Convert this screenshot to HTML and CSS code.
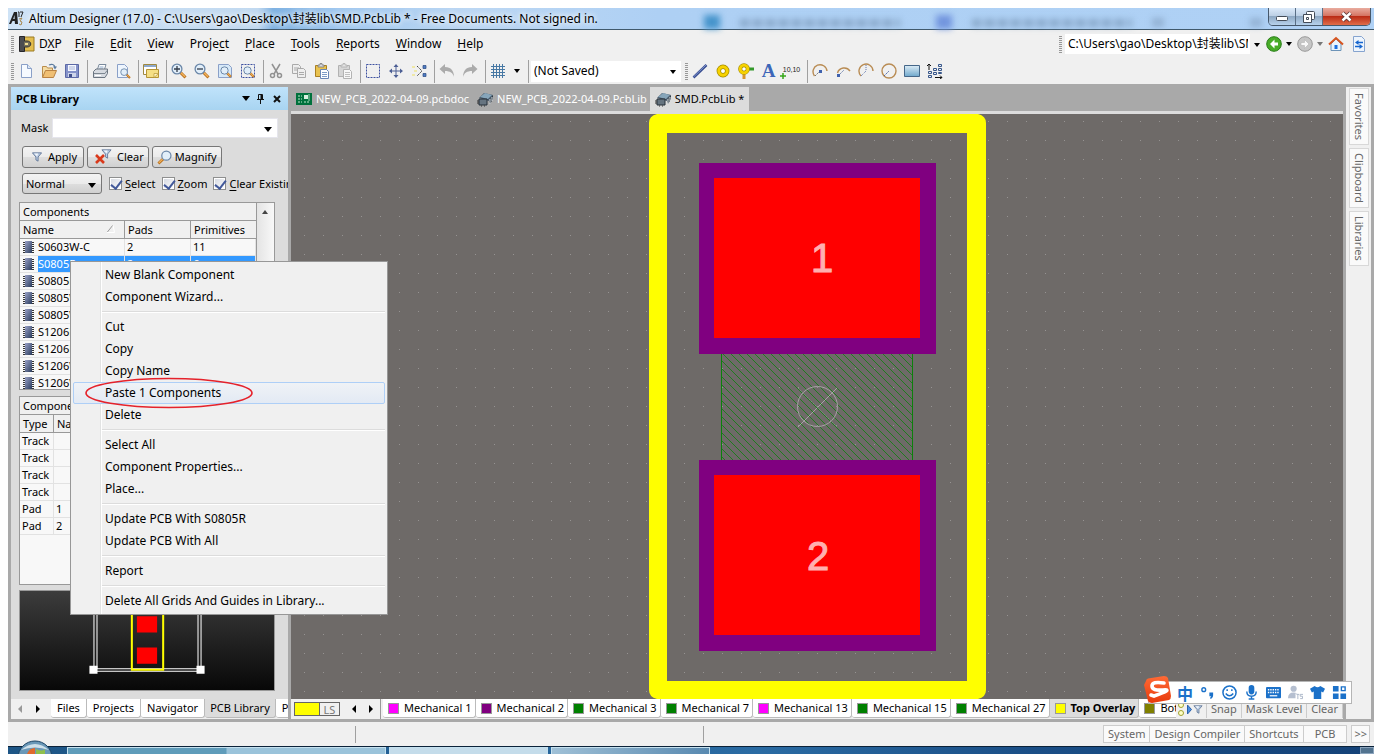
FILE: index.html
```html
<!DOCTYPE html>
<html lang="en">
<head>
<meta charset="utf-8">
<title>Altium Designer (17.0)</title>
<link rel="stylesheet" href="styles.css">
</head>
<body>
<svg class="defs" aria-hidden="true">
  <defs>
    <linearGradient id="gBlue" x1="0" y1="0" x2="0" y2="1"><stop offset="0" stop-color="#dcecf6"/><stop offset="1" stop-color="#6fa8cc"/></linearGradient>
    <linearGradient id="gChip" x1="0" y1="0" x2="1" y2="1"><stop offset="0" stop-color="#9aa2c8"/><stop offset="1" stop-color="#2b3d5e"/></linearGradient>
    <linearGradient id="gSogou" x1="0" y1="0" x2="0" y2="1"><stop offset="0" stop-color="#ff6a35"/><stop offset="1" stop-color="#e83a0c"/></linearGradient>
    <symbol id="chip" viewBox="0 0 12 14"><path d="M0 2.500h11M0 4.500h11M0 6.500h11M0 8.500h11M0 10.500h11M0 12.500h11" stroke="#333"/><path d="M2 1h7v12H2z" fill="url(#gChip)"/></symbol>
    <symbol id="lens" viewBox="0 0 16 16"><path d="M9.5 9.5l5 5" stroke="#b9701d" stroke-width="3"/><path d="M9.5 9.2l4.5 4.5" stroke="#f2b35c" stroke-width="1.4"/><circle cx="6" cy="6" r="4.9" fill="#e1eef9" stroke="#6b87a8" stroke-width="1.3"/></symbol>
    <symbol id="paste" viewBox="0 0 16 16"><path d="M1.5 2.5h11v11h-11z" fill="#e9c24f" stroke="#a97f22"/><path d="M4 4V2h2V.5h2V2h2v2z" fill="#d9dbe0" stroke="#777" stroke-width=".8"/><path d="M6.500 6.500h6l2 2v7h-8z" fill="#fff" stroke="#6a86b4"/><path d="M8 9.500h5M8 11.500h5M8 13.500h5" stroke="#7f9cc6"/></symbol>
    <symbol id="pkg" viewBox="0 0 16 16"><path d="M2 7l5-5 9 2-4 6z" fill="#46586a"/><path d="M3 6l5-4 7 2-4 4z" fill="#86a5ba"/><path d="M12 10l4-6v4l-3 5" fill="#23313d"/><path d="M13 8v5M15 6v4M6 9v3" stroke="#dfe4e8"/><path d="M2 8h8v6H2z" fill="#667480" stroke="#26303a"/><path d="M0 10h2M0 12h2M4 15h1M7 15h1" stroke="#333"/></symbol>
    <symbol id="funnel" viewBox="0 0 12 12"><path d="M.5 1h11L7.300 6v5l-2.600-1.500V6z" fill="#b9cbe3" stroke="#5a7091"/><path d="M2.500 1.700h5L6 5z" fill="#f2f7fc"/></symbol>
    <symbol id="left" viewBox="0 0 6 8"><path d="M5 0v8L1 4z" fill="currentColor"/></symbol>
    <symbol id="right" viewBox="0 0 6 8"><path d="M1 0v8l4-4z" fill="currentColor"/></symbol>
  </defs>
</svg>
<div class="app">
  <header class="titlebar">
    <svg class="logo" viewBox="0 0 16 16"><path d="M1 14L6 2h3l1 12H7l-.3-3H4.500L3 14zM5.200 9h1.500L6.500 5z" fill="#222"/><path d="M10 2h1v5M12 2h3l-2 5" stroke="#222" fill="none"/><path d="M11 9l3-1-2 3 2 1-1 3-2-1" stroke="#a98a52" fill="none"/></svg>
    <h1 class="title">Altium Designer (17.0) - C:\Users\gao\Desktop\封装lib\SMD.PcbLib * - Free Documents. Not signed in.</h1>
    <div class="glass"><i class="glass-icon"></i><i class="glass-text wide"></i><i class="glass-icon violet"></i><i class="glass-text"></i><i class="glass-mark"></i><i class="glass-mark"></i></div>
    <div class="window-buttons">
      <button class="win" aria-label="Minimize"><svg width="14" height="10" viewBox="0 0 14 10"><rect x="1.500" y="4.500" width="11" height="4" rx="1" fill="#fff" stroke="#444c58"/></svg></button>
      <button class="win" aria-label="Restore"><svg width="12" height="12" viewBox="0 0 12 12"><rect x="3.500" y=".5" width="8" height="8" rx="1" fill="#fff" stroke="#444c58"/><path d="M.5 3.500h8v8h-8z" fill="#fff" stroke="#444c58"/><path d="M3.500 6.500h2v2h-2z" fill="none" stroke="#444c58"/></svg></button>
      <button class="win close" aria-label="Close"><svg width="13" height="11" viewBox="0 0 13 11"><path d="M2.500 2l8 7.500m0-7.500l-8 7.500" stroke="#5c3535" stroke-width="4.200"/><path d="M2.500 2l8 7.500m0-7.500l-8 7.500" stroke="#fff" stroke-width="2.500"/></svg></button>
    </div>
  </header>

  <nav class="menubar">
    <i class="grip"></i>
    <svg class="dxp" viewBox="0 0 16 16"><path d="M5 1h10v14H5z" fill="#e3bd4e" stroke="#9b7a22"/><path d="M.5.500h5v15h-5z" fill="#4c4c50" stroke="#26262a"/><path d="M5 5h3c5 0 5 6 0 6H5" fill="#76705c" stroke="#333"/><path d="M6 8h3" stroke="#f1dd91" stroke-width="2"/></svg>
    <button class="menu first">D<u>X</u>P</button><button class="menu"><u>F</u>ile</button><button class="menu"><u>E</u>dit</button><button class="menu"><u>V</u>iew</button><button class="menu">Proje<u>c</u>t</button><button class="menu"><u>P</u>lace</button><button class="menu"><u>T</u>ools</button><button class="menu"><u>R</u>eports</button><button class="menu"><u>W</u>indow</button><button class="menu"><u>H</u>elp</button>
    <div class="path-tools">
      <i class="grip"></i>
      <div class="combo path"><select aria-label="Document path"><option>C:\Users\gao\Desktop\封装lib\SMD</option></select></div>
      <button class="tool nav" aria-label="Back"><svg viewBox="0 0 16 16"><circle cx="8" cy="8" r="7.300" fill="#48ac28" stroke="#297e18"/><path d="M8.500 3.500L4 8l4.500 4.500v-3H12v-3H8.500z" fill="#fff"/></svg></button>
      <button class="drop" aria-label="Back history"></button>
      <button class="tool nav" aria-label="Forward"><svg viewBox="0 0 16 16"><circle cx="8" cy="8" r="7.300" fill="#c6c6c6" stroke="#999"/><path d="M7.500 3.500L12 8l-4.500 4.500v-3H4v-3h3.500z" fill="#f8f8f8" stroke="#aaa" stroke-width=".5"/></svg></button>
      <button class="drop dim" aria-label="Forward history"></button>
      <button class="tool" aria-label="Home"><svg viewBox="0 0 16 16"><path d="M3 8v6.500h10V8L8 3z" fill="#e9f3fc" stroke="#6d94b8"/><path d="M6.500 9h3v4h-3z" fill="#1b6fe0"/><path d="M1 8.500L8 2l7 6.500" fill="none" stroke="#d8551f" stroke-width="2"/></svg></button>
      <button class="tool" aria-label="Refresh"><svg viewBox="0 0 16 16"><path d="M2.500.500h8l3 3v12h-11z" fill="#eef5fd" stroke="#86a4cf"/><path d="M12 6.500H7M4 10.500h5" stroke="#1565cf" stroke-width="1.500"/><path d="M7.500 4l-3.500 2.500 3.500 2.500zM8.500 8l3.500 2.500-3.500 2.500z" fill="#1565cf"/></svg></button>
    </div>
  </nav>

  <div class="toolbar">
    <i class="grip"></i>
    <button class="tool" aria-label="New"><svg viewBox="0 0 16 16"><path d="M3.500 1.500h6l4 4v9h-10z" fill="#f6faff" stroke="#8aa0c8"/><path d="M9.500 1.500v4h4" fill="#dbe7f6" stroke="#8aa0c8"/></svg></button>
    <button class="tool" aria-label="Open"><svg viewBox="0 0 16 16"><path d="M1.500 14V3.500h4l1 1.500h5v3" fill="#f4dca4" stroke="#b98c4b"/><path d="M1.500 14.500l3-7h11l-3 7z" fill="#f0bf73" stroke="#b98243"/><path d="M8 2c3-1.500 5-.5 6 2" fill="none" stroke="#5d7c9f" stroke-width="1.300"/><path d="M12 3.500h4l-2 3z" fill="#5d7c9f"/></svg></button>
    <button class="tool" aria-label="Save"><svg viewBox="0 0 16 16"><path d="M1.500 1.500h13v13h-13z" fill="#8592c9" stroke="#5c69a6"/><path d="M4 2h8v6H4z" fill="#f6f8ff"/><path d="M5 4h6M5 6h6" stroke="#a9b6d8"/><path d="M4 10h8v4H4z" fill="#cfd6ea"/><path d="M5 11h3v3H5z" fill="#42508b"/></svg></button>
    <i class="sep"></i>
    <button class="tool" aria-label="Print"><svg viewBox="0 0 16 16"><path d="M5 8l2-6.500h7L12 8z" fill="#fff" stroke="#7a8a9c"/><path d="M7.500 4h4M7 6h4" stroke="#8eaacb"/><path d="M1.500 8.500L4 6h11.500v4.500L13 14.500H1.500z" fill="#d7dbe1" stroke="#6a7480"/><path d="M2 10.500h11l2-3" fill="none" stroke="#7d8791"/><path d="M3 12.500h6" stroke="#fff"/></svg></button>
    <button class="tool" aria-label="Print preview"><svg viewBox="0 0 16 16"><path d="M2.500 1.500h7l3 3v10h-10z" fill="#eef5fd" stroke="#8aa0c8"/><use href="#lens" x="5" y="5" width="11" height="11"/></svg></button>
    <i class="sep"></i>
    <button class="tool" aria-label="Workspace"><svg viewBox="0 0 16 16"><path d="M.5 1.500h13v10H.5z" fill="#fff" stroke="#a0893f"/><path d="M1 2h12v2H1z" fill="#8da9cd"/><path d="M3.500 6.500h12v8h-12z" fill="#f5df84" stroke="#b69536"/><path d="M11 14.500l4.500-4h-4.500z" fill="#fff6c5" stroke="#b69536" stroke-width=".7"/></svg></button>
    <i class="sep"></i>
    <button class="tool" aria-label="Zoom in"><svg viewBox="0 0 16 16"><use href="#lens"/><path d="M3 6h6M6 3v6" stroke="#333d4b" stroke-width="1.300"/></svg></button>
    <button class="tool" aria-label="Zoom out"><svg viewBox="0 0 16 16"><use href="#lens"/><path d="M3 6h6" stroke="#333d4b" stroke-width="1.300"/></svg></button>
    <button class="tool" aria-label="Fit document"><svg viewBox="0 0 16 16"><path d="M1.500 1.500h10l3 3v10h-13z" fill="#d7e9f8" stroke="#8aa0c8"/><use href="#lens" x="3" y="3" width="12" height="12"/></svg></button>
    <button class="tool" aria-label="Zoom area"><svg viewBox="0 0 16 16"><path d="M1.500 1.500h13v13h-13z" fill="none" stroke="#3d51a0" stroke-dasharray="2 1"/><use href="#lens" x="3" y="3" width="12" height="12"/></svg></button>
    <i class="sep"></i>
    <button class="tool" aria-label="Cut"><svg viewBox="0 0 16 16" fill="none" stroke="#929292" stroke-width="1.500"><path d="M4 1l6 10M12 1L6 11"/><circle cx="4.500" cy="12.500" r="2"/><circle cx="11.500" cy="12.500" r="2"/></svg></button>
    <button class="tool" aria-label="Copy"><svg viewBox="0 0 16 16" fill="#eee" stroke="#aaa"><path d="M1.500 1.500h6l2 2v7h-8zM3 5h5M3 7h5"/><path d="M6.500 5.500h6l2 2v7h-8zM8 9.500h5M8 11.500h5"/></svg></button>
    <button class="tool" aria-label="Paste"><svg viewBox="0 0 16 16"><use href="#paste"/></svg></button>
    <button class="tool grey" aria-label="Rubber stamp"><svg viewBox="0 0 16 16"><use href="#paste"/></svg></button>
    <i class="sep"></i>
    <button class="tool" aria-label="Select area"><svg viewBox="0 0 16 16"><path d="M1.500 1.500h13v13h-13z" fill="none" stroke="#3d51a0" stroke-dasharray="2 1"/></svg></button>
    <button class="tool" aria-label="Move"><svg viewBox="0 0 16 16"><path d="M8 2v12M2 8h12" stroke="#4c5f94"/><path d="M8 1l2.500 3h-5zM8 15l2.500-3h-5zM1 8l3-2.500v5zM15 8l-3-2.500v5z" fill="#4c5f94"/></svg></button>
    <button class="tool" aria-label="Deselect"><svg viewBox="0 0 16 16"><path d="M1 3h3v2H1zM1 11h3v2H1zM3 7h3v2H3z" fill="#efe8a8"/><path d="M6 3l5 5-5 5" fill="none" stroke="#444" stroke-dasharray="1.500 .7"/><path d="M12 2.500h3v3h-3zM12 10.500h3v3h-3z" fill="#4f7cc4" stroke="#29497f" stroke-width=".7"/></svg></button>
    <i class="sep"></i>
    <button class="tool" aria-label="Undo"><svg viewBox="0 0 16 16"><path d="M6 1v3c6 0 9 4 9 10-1-4-4-6-9-6v3L.5 6z" fill="#ababab"/></svg></button>
    <button class="tool" aria-label="Redo"><svg viewBox="0 0 16 16"><path d="M10 1v3C4 4 1 8 1 14c1-4 4-6 9-6v3l5.500-5z" fill="#ababab"/></svg></button>
    <i class="sep"></i>
    <button class="tool" aria-label="Grid"><svg viewBox="0 0 16 16"><path d="M3.500 1v14M6.500 1v14M9.500 1v14M12.500 1v14M1 3.500h14M1 6.500h14M1 9.500h14M1 12.500h14" stroke="#4778a4"/></svg></button>
    <button class="drop" aria-label="Grid options"></button>
    <i class="sep"></i>
    <div class="combo saved"><select aria-label="Selection memory"><option>(Not Saved)</option></select></div>
    <i class="grip"></i>
    <button class="tool" aria-label="Line"><svg viewBox="0 0 16 16"><path d="M1.500 14.500L14.500 2" stroke="#374d91" stroke-width="2.600"/><path d="M1.500 14L14 2" stroke="#8195ce"/></svg></button>
    <button class="tool" aria-label="Pad"><svg viewBox="0 0 16 16"><circle cx="8" cy="8" r="4.200" fill="#fff" stroke="#a08a00" stroke-width="4.400"/><circle cx="8" cy="8" r="4.200" fill="none" stroke="#f7d200" stroke-width="3"/></svg></button>
    <button class="tool" aria-label="Via"><svg viewBox="0 0 16 16"><path d="M10 6h6" stroke="#33992a" stroke-width="3"/><path d="M6 9v7" stroke="#d7962c" stroke-width="3"/><circle cx="6" cy="6" r="3.800" fill="#fff" stroke="#a08a00" stroke-width="4"/><circle cx="6" cy="6" r="3.800" fill="none" stroke="#f7d200" stroke-width="2.800"/></svg></button>
    <button class="tool letter" aria-label="String">A</button>
    <button class="tool coord" aria-label="Coordinate">10,10<svg viewBox="0 0 6 6"><path d="M3 0v6M0 3h6" stroke="#35a517" stroke-width="1.500"/></svg></button>
    <i class="sep"></i>
    <button class="tool" aria-label="Arc by center"><svg viewBox="0 0 16 16" fill="none"><path d="M2.500 13A7 7 0 1 1 15 8" stroke="#b98c54" stroke-width="1.400"/><path d="M3 13l5-5" stroke="#777" stroke-dasharray="2 1"/><path d="M7 7h3v3H7z" fill="#3f61ae"/></svg></button>
    <button class="tool" aria-label="Arc by edge"><svg viewBox="0 0 16 16" fill="none"><path d="M2.500 10A7 7 0 0 1 15 8" stroke="#b98c54" stroke-width="1.400"/><path d="M3 13l6-6" stroke="#7184ad" stroke-dasharray="2 1"/><path d="M2 11h3v3H2z" fill="#3f61ae"/></svg></button>
    <button class="tool" aria-label="Arc any angle"><svg viewBox="0 0 16 16" fill="none"><path d="M3 13A7 7 0 1 1 15 8" stroke="#b98c54" stroke-width="1.400"/><path d="M3 13l5-5V1" stroke="#5b72ad" stroke-dasharray="1 1"/></svg></button>
    <button class="tool" aria-label="Full circle"><svg viewBox="0 0 16 16" fill="none"><circle cx="8" cy="8" r="7" stroke="#b98c54" stroke-width="1.400"/><path d="M3 13l5-5" stroke="#4d65a5" stroke-dasharray="2 1"/></svg></button>
    <button class="tool" aria-label="Fill"><svg viewBox="0 0 16 16"><path d="M.5 2.500h15v11H.5z" fill="url(#gBlue)" stroke="#456789"/></svg></button>
    <button class="tool" aria-label="Paste array"><svg viewBox="0 0 16 16" fill="none" stroke="#37568b"><path d="M2 7V1M0 3l2-2 2 2M8 14.500h7M13 12.500l2 2-2 1.500" stroke="#111"/><path d="M1.500 8.500h3v2h-3zM1.500 12.500h3v2h-3zM6.500 5.500h3v2h-3zM6.500 9.500h3v2h-3zM11.500 1.500h3v2h-3zM11.500 5.500h3v2h-3zM11.500 9.500h3v1h-3z"/></svg></button>
  </div>

  <main class="work">
    <aside class="panel">
      <div class="panel-head"><h2>PCB Library</h2>
        <button class="drop" aria-label="Panel menu"></button>
        <button class="mini" aria-label="Pin"><svg width="10" height="10" viewBox="0 0 10 10"><path d="M2.500.500h4v5h-4zM1 5.500h7M4.500 6v4" fill="none" stroke="#111"/><path d="M5.500 1v4" stroke="#111" stroke-width="2"/></svg></button>
        <button class="mini" aria-label="Close panel"><svg width="8" height="8" viewBox="0 0 8 8"><path d="M1 1l6 6m0-6L1 7" stroke="#111" stroke-width="2"/></svg></button>
      </div>
      <div class="panel-body">
        <div class="row mask"><label for="mask">Mask</label><div class="combo"><select id="mask"><option></option></select></div></div>
        <div class="row buttons">
          <button class="btn"><svg width="12" height="10" viewBox="0 0 12 12"><use href="#funnel"/></svg>Apply</button>
          <button class="btn"><svg width="18" height="16" viewBox="0 0 18 16"><path d="M2 6l8 8m0-8l-8 8" stroke="#d93a1c" stroke-width="2.600"/><use href="#funnel" x="7" y="0" width="11" height="10"/></svg>Clear</button>
          <button class="btn"><svg width="15" height="15" viewBox="0 0 16 16"><g transform="matrix(-1 0 0 1 16 0)"><use href="#lens"/></g></svg>Magnify</button>
        </div>
        <div class="row options">
          <div class="combo raised"><select aria-label="Mode"><option>Normal</option></select></div>
          <label class="check"><input type="checkbox" checked><span><u>S</u>elect</span></label>
          <label class="check"><input type="checkbox" checked><span><u>Z</u>oom</span></label>
          <label class="check"><input type="checkbox" checked><span><u>C</u>lear Existing</span></label>
        </div>
        <div class="list components">
          <table class="grid">
            <caption>Components</caption>
            <colgroup><col class="c-name"><col class="c-pads"><col></colgroup>
            <thead><tr><th>Name<svg class="sort" width="8" height="8" viewBox="0 0 8 8"><path d="M0 7.500L6 0" stroke="#999"/><path d="M6 0l1.500 7.500H0" fill="none" stroke="#fff"/></svg></th><th>Pads</th><th>Primitives</th></tr></thead>
            <tbody>
              <tr><td><svg class="chip"><use href="#chip"/></svg><span>S0603W-C</span></td><td>2</td><td>11</td></tr>
              <tr class="selected"><td><svg class="chip"><use href="#chip"/></svg><span>S0805R</span></td><td>2</td><td>6</td></tr>
              <tr><td><svg class="chip"><use href="#chip"/></svg><span>S0805R</span></td><td></td><td></td></tr>
              <tr><td><svg class="chip"><use href="#chip"/></svg><span>S0805W</span></td><td></td><td></td></tr>
              <tr><td><svg class="chip"><use href="#chip"/></svg><span>S0805W</span></td><td></td><td></td></tr>
              <tr><td><svg class="chip"><use href="#chip"/></svg><span>S1206R</span></td><td></td><td></td></tr>
              <tr><td><svg class="chip"><use href="#chip"/></svg><span>S1206R</span></td><td></td><td></td></tr>
              <tr><td><svg class="chip"><use href="#chip"/></svg><span>S1206W</span></td><td></td><td></td></tr>
              <tr><td><svg class="chip"><use href="#chip"/></svg><span>S1206W</span></td><td></td><td></td></tr>
            </tbody>
          </table>
          <div class="scroll"><i></i></div>
        </div>
        <div class="list primitives">
          <table class="grid">
            <caption>Component</caption>
            <colgroup><col class="c-type"><col></colgroup>
            <thead><tr><th>Type</th><th>Name</th></tr></thead>
            <tbody><tr><td>Track</td><td></td></tr><tr><td>Track</td><td></td></tr><tr><td>Track</td><td></td></tr><tr><td>Track</td><td></td></tr><tr><td>Pad</td><td>1</td></tr><tr><td>Pad</td><td>2</td></tr></tbody>
          </table>
        </div>
        <svg class="preview" viewBox="0 0 254 98" preserveAspectRatio="xMidYMax slice"><g fill="none"><path d="M74.500 0v79.500h106V0M77.500 0v77h100V0" stroke="#fff"/><path d="M112 0v78h31V0" stroke="#ff0" stroke-width="2"/></g><path d="M117 25h20v16h-20zM117 56h20v16h-20z" fill="#f00"/><path d="M70 74h8v8h-8zM176 74h8v8h-8z" fill="#fff"/></svg>
      </div>
      <div class="panel-tabs">
        <span class="arrows"><button class="dim" aria-label="Previous panel"><svg width="6" height="8"><use href="#left"/></svg></button><button aria-label="Next panel"><svg width="6" height="8"><use href="#right"/></svg></button></span>
        <button class="tab">Files</button><button class="tab">Projects</button><button class="tab">Navigator</button><button class="tab active">PCB Library</button><button class="tab">PCB</button>
      </div>
    </aside>

    <section class="editor">
      <div class="doc-tabs">
        <button class="doc"><svg viewBox="0 0 16 16"><path d="M0 2h16v12H0z" fill="#00713c"/><path d="M2 5h4M2 8h4M2 11h4M8 11h6" stroke="#bfe8cd" stroke-dasharray="2 1"/><path d="M8 4h4v4H8z" fill="#d8f0e0"/><path d="M13 3v7" stroke="#9cd8b3"/></svg>NEW_PCB_2022-04-09.pcbdoc</button>
        <button class="doc"><svg viewBox="0 0 16 16"><use href="#pkg"/></svg>NEW_PCB_2022-04-09.PcbLib</button>
        <button class="doc active"><svg viewBox="0 0 16 16"><use href="#pkg"/></svg>SMD.PcbLib *</button>
      </div>
      <svg class="canvas" viewBox="0 0 1052 585" preserveAspectRatio="xMidYMid slice" role="img" aria-label="Footprint S0805R">
        <defs>
          <pattern id="dots" width="19" height="19" patternUnits="userSpaceOnUse"><rect x="13" y="7" width="1" height="1" fill="#969392"/></pattern>
          <pattern id="hatch" width="8" height="8" patternUnits="userSpaceOnUse"><path d="M-1-1l10 10M-1 7l2 2M7-1l2 2" stroke="#0c800c" stroke-width=".8" shape-rendering="crispEdges"/></pattern>
        </defs>
        <path d="M0 0h1052v585H0z" fill="#6e6a68"/><path d="M0 0h1052v585H0z" fill="url(#dots)"/>
        <path d="M366 0h321q8 2 8 9v567q0 7-8 9H366q-8-2-8-9V9q0-7 8-9zM376 19v548h300V19z" fill="#ff0" fill-rule="evenodd"/>
        <path d="M430 240h192v106H430z" fill="url(#hatch)"/><path d="M430.500 240v106M621.500 240v106" stroke="#0c800c"/>
        <path d="M408 49h237v191H408zM408 346h237v191H408z" fill="#800080"/>
        <path d="M423 64h206v160H423zM423 361h206v160H423z" fill="#f00"/>
        <g fill="none" stroke="#a7a2a5"><circle cx="526.500" cy="292.500" r="20"/><path d="M507 313l39-39"/><path d="M507 274l39 39" stroke="#7d8f7e" stroke-dasharray="2 1"/></g>
        <g class="pad-names"><text x="531" y="158">1</text><text x="527" y="456">2</text></g>
      </svg>
      <div class="layers">
        <button class="layer-set"><i></i><span>LS</span></button>
        <span class="arrows"><button aria-label="Previous layer"><svg width="6" height="8"><use href="#left"/></svg></button><button aria-label="Next layer"><svg width="6" height="8"><use href="#right"/></svg></button></span>
        <div class="layer-tabs">
          <button class="tab layer"><i class="magenta"></i>Mechanical 1</button><button class="tab layer"><i class="purple"></i>Mechanical 2</button><button class="tab layer"><i class="green"></i>Mechanical 3</button><button class="tab layer"><i class="green"></i>Mechanical 7</button><button class="tab layer"><i class="magenta"></i>Mechanical 13</button><button class="tab layer"><i class="green"></i>Mechanical 15</button><button class="tab layer"><i class="green"></i>Mechanical 27</button><button class="tab layer active"><i class="yellow"></i>Top Overlay</button><button class="tab layer"><i class="olive"></i>Bottom</button>
        </div>
        <div class="filters">
          <button aria-label="Filter"><svg width="28" height="14" viewBox="0 0 28 14"><circle cx="4" cy="3" r="2.500" fill="#ffffc8" stroke="#a0a030"/><circle cx="4" cy="11" r="2.500" fill="#ffffc8" stroke="#a0a030"/><path d="M10.500 3v9l4-4.500z" fill="#4b8fe0" stroke="#2a62ad"/><use href="#funnel" x="16" y="3" width="10" height="9"/></svg></button><button>Snap</button><button>Mask Level</button><button>Clear</button>
        </div>
      </div>
    </section>

    <aside class="side"><button>Favorites</button><button>Clipboard</button><button>Libraries</button></aside>
  </main>

  <footer class="status">
    <span class="cell coord-cell"></span><span class="cell hint-cell"></span>
    <div class="status-buttons"><button>System</button><button>Design Compiler</button><button>Shortcuts</button><button class="pcb">PCB</button></div><button class="more">&gt;&gt;</button>
  </footer>

  <div class="taskbar"><i class="start"></i><i class="task teal"></i><i class="task pale"></i><i class="task mid"></i><i class="desk"></i>
    <svg class="orb" width="36" height="14" viewBox="0 0 36 14"><circle cx="18" cy="18" r="17" fill="#6a98b8" stroke="#1c4466"/><path d="M4 10q14-12 28 0-14-5-28 0z" fill="#cfe0ea"/><path d="M10 14q2-6 8-6v6z" fill="#e06a2c"/><path d="M19 9q6 3 9 0v5h-9z" fill="#8fc04c"/></svg>
  </div>

  <div class="context" role="menu">
    <button role="menuitem">New Blank Component</button><button role="menuitem">Component Wizard...</button><hr>
    <button role="menuitem">Cut</button><button role="menuitem">Copy</button><button role="menuitem">Copy Name</button><button role="menuitem" class="hot">Paste 1 Components</button><button role="menuitem">Delete</button><hr>
    <button role="menuitem">Select All</button><button role="menuitem">Component Properties...</button><button role="menuitem">Place...</button><hr>
    <button role="menuitem">Update PCB With S0805R</button><button role="menuitem">Update PCB With All</button><hr>
    <button role="menuitem">Report</button><hr>
    <button role="menuitem">Delete All Grids And Guides in Library...</button>
    <svg class="ring" viewBox="0 0 168 32"><ellipse cx="84" cy="16" rx="83" ry="14.500" fill="none" stroke="#e5222b" stroke-width="1.600"/></svg>
  </div>

  <div class="ime">
    <svg class="sogou" viewBox="0 0 28 28"><path d="M2 5Q2 3 4 2.500L20 0q3 0 4 2l3 18q0 3-2 4L8 27q-3 0-4-2L0 9z" fill="url(#gSogou)"/><path d="M20 7Q8 5 8 10t11 4-9 6l-3-1" fill="none" stroke="#fff" stroke-width="3.600" stroke-linecap="round"/></svg>
    <div class="ime-tools">
      <button lang="zh">中</button>
      <button aria-label="Punctuation"><svg viewBox="0 0 16 16"><circle cx="4" cy="5" r="2" fill="none" stroke="#1b71c9" stroke-width="1.500"/><path d="M10 8h4v3q0 3-3 4v-2l1-1h-2z" fill="#1b71c9"/></svg></button>
      <button aria-label="Emoji"><svg viewBox="0 0 16 16" fill="none" stroke="#1b71c9" stroke-width="1.600"><circle cx="8" cy="8" r="7"/><path d="M5.500 4.500v2M10.500 4.500v2M4 9q4 5 8 0"/></svg></button>
      <button aria-label="Voice"><svg viewBox="0 0 16 16"><rect x="5" y="0" width="6" height="10" rx="3" fill="#1b71c9"/><path d="M3 7q0 5 5 5t5-5M8 12v3M5 15h6" fill="none" stroke="#1b71c9" stroke-width="1.500"/></svg></button>
      <button aria-label="Keyboard"><svg viewBox="0 0 16 16"><rect x="0" y="2" width="16" height="12" rx="1" fill="#1b71c9"/><path d="M2 5h12M2 8h12" stroke="#fff" stroke-width="1.500" stroke-dasharray="1.500 1"/><path d="M4 11.500h8" stroke="#fff" stroke-width="1.300"/></svg></button>
      <button aria-label="Account"><svg viewBox="0 0 16 16"><circle cx="6" cy="4" r="3.300" fill="#b5bfd0"/><path d="M0 14q0-6 6-6 4 0 5 3v3z" fill="#b5bfd0"/><path d="M8 9h8v6H8z" fill="#fff"/><path d="M9 10h3M10.500 10v5M16 10h-3v2h2.500v2.500H13" fill="none" stroke="#aab5c8"/></svg></button>
      <button aria-label="Skins"><svg viewBox="0 0 16 16"><path d="M5 1q3 3 6 0l5 3-2 4-2-1v8H4V7L2 8 0 4z" fill="#1b71c9"/></svg></button>
      <button aria-label="Toolbox"><svg viewBox="0 0 16 16"><path d="M1 1h6v6H1zM1 9h6v6H1zM9 9h6v6H9z" fill="#1b71c9"/><path d="M10 2h4v4h-4z" fill="none" stroke="#1b71c9" stroke-width="1.500"/></svg></button>
    </div>
  </div>
</div>
</body>
</html>
```
FILE: styles.css
```css
* { box-sizing: border-box; }
body { margin: 0; background: #fff; font: 11px/16px "Noto Sans", "Noto Sans CJK SC", sans-serif; color: #000; }
button, select, input { font: inherit; color: inherit; margin: 0; }
button { padding: 0; border: 0; background: none; white-space: nowrap; }
svg { display: block; flex: none; }
.defs { position: absolute; width: 0; height: 0; }
.app { position: relative; display: flex; flex-direction: column; height: 100vh; padding: 8px 8px 0; overflow: hidden; }

.titlebar { display: flex; height: 22px; flex: none; align-items: flex-start; border-bottom: 1px solid #40596c; background: linear-gradient(90deg, #cfe3f6 0, #c1d9f0 250px, #7fb2e2 265px, #a0c8ef 330px, #bcd7f3 460px, #aed0f4 650px, #afd1f5 100%); }
.logo { width: 16px; height: 16px; margin: 2px 5px 0 0; }
.title { margin: 0; font-size: 12px; line-height: 21px; font-weight: 400; white-space: nowrap; text-shadow: 0 0 6px #fff, 0 0 6px #fff; }
.glass { display: flex; flex: 1; align-items: center; height: 21px; gap: 20px; padding-left: 106px; overflow: hidden; filter: blur(3px); }
.glass-icon { width: 16px; height: 14px; flex: none; background: #4594cb; margin-top: 6px; }
.glass-icon.violet { background: #7295de; margin-left: 16px; }
.glass-text { width: 160px; height: 8px; margin-top: 8px; background: repeating-linear-gradient(90deg, #6e8cac 0 9px, #a5c5e7 9px 13px); opacity: .6; }
.glass-mark { width: 12px; height: 9px; margin-top: 8px; background: #809dbd; opacity: .6; }
.glass-mark + .glass-mark { margin-left: 66px; }
.window-buttons { display: flex; height: 18px; margin-right: 3px; border: 1px solid #46586b; border-top: 0; border-radius: 0 0 5px 5px; overflow: hidden; }
.win { display: flex; width: 27px; align-items: center; justify-content: center; border-right: 1px solid #596e85; background: linear-gradient(#dceafa, #bdd0e5 45%, #8fa9c4 50%, #b7d2ec); }
.win.close { width: 47px; border-right: 0; background: linear-gradient(#e9ac9f, #d57463 45%, #bb2c16 50%, #e06d4a); }

.menubar, .toolbar { display: flex; flex: none; align-items: center; background: #f0f0f0; font-size: 12px; }
.menubar { height: 28px; padding-left: 3px; }
.toolbar { height: 26px; padding-left: 3px; }
.grip { width: 3px; height: 17px; flex: none; background: repeating-linear-gradient(#989898 0 1px, transparent 1px 2px); }
.dxp { width: 16px; height: 16px; margin-left: 5px; }
.menu { padding: 0 8px; line-height: 20px; }
.menu.first { padding: 0 5px 0 4px; }
u { text-underline-offset: 2px; }
.path-tools { display: flex; align-items: center; margin-left: auto; padding-right: 4px; }
.combo { position: relative; display: flex; background: #fff; }
.combo select { flex: 1; width: 100%; padding: 0 16px 0 2px; border: 0; background: none; appearance: none; overflow: hidden; }
.combo::after { content: ""; position: absolute; right: 5px; top: calc(50% - 1px); border: 3px solid transparent; border-top: 4px solid #000; border-bottom: 0; pointer-events: none; }
.path { width: 197px; height: 20px; margin-left: 3px; border-right: 12px solid #f0f0f0; }
.path select { padding: 0 2px 0 3px; }
.path::after { right: -10px; }
.saved { width: 150px; height: 21px; margin: 0 4px 0 2px; }
.saved select { padding-left: 3px; }
.tool { display: flex; width: 23px; height: 23px; flex: none; align-items: center; justify-content: center; }
.tool svg { width: 16px; height: 16px; }
.grey { filter: grayscale(1); opacity: .55; }
.toolbar .sep { width: 5px; height: 23px; flex: none; border-right: 1px solid #a0a0a0; }
.drop { display: flex; width: 15px; height: 16px; align-items: center; justify-content: center; }
.nav + .drop { width: 8px; }
.drop::before { content: ""; border: 3px solid transparent; border-top: 4px solid #000; border-bottom: 0; }
.drop.dim::before { border-top-color: #777; }
.letter { font: bold 19px/20px "Liberation Serif", serif; color: #3c66b8; }
.tool.coord { position: relative; font: 7px/12px "Liberation Sans", sans-serif; color: #222; align-items: flex-start; padding-top: 4px; }
.coord svg { position: absolute; left: 0; bottom: 4px; width: 6px; height: 6px; }

.work { display: flex; flex: 1; min-height: 0; padding: 3px; gap: 3px; background: #a9a9a9; }
.panel { display: flex; width: 277px; flex: none; flex-direction: column; overflow: hidden; background: #dcdcdc; }
.panel-head { display: flex; height: 23px; flex: none; align-items: center; padding: 0 3px 0 5px; background: linear-gradient(#c0e3fb, #a8d4f1); }
.panel-head h2 { flex: 1; margin: 0; font-size: 11px; }
.panel-head .drop::before { border-width: 5px 4px 0; }
.mini { display: flex; width: 16px; height: 16px; align-items: center; justify-content: center; }
.panel-body { display: flex; flex: 1; min-height: 0; flex-direction: column; padding: 8px 0 8px 8px; }
.row { display: flex; flex: none; align-items: center; padding-left: 3px; }
.mask { height: 20px; padding: 0 10px 0 2px; gap: 4px; }
.mask .combo { flex: 1; height: 20px; border: 1px solid #e5e5ec; }
.mask .combo::after, .raised::after { border-width: 5px 4px 0; }
.buttons { gap: 3px; margin-top: 8px; }
.btn { display: flex; height: 22px; align-items: center; gap: 5px; padding: 0 4px 0 6px; border: 1px solid #777; border-radius: 3px; background: linear-gradient(#f3f3f3, #ebebeb 50%, #dedede 51%, #d0d0d0); }
.btn:first-child { padding: 0 6px 0 8px; }
.btn:last-child { padding-left: 4px; gap: 3px; }
.options { margin-top: 5px; white-space: nowrap; }
.raised { width: 80px; height: 21px; flex: none; margin-right: 7px; border: 1px solid #777; border-radius: 3px; background: linear-gradient(#f3f3f3, #ebebeb 50%, #dedede 51%, #d0d0d0); }
.raised select { padding-left: 3px; }
.check { display: flex; flex: none; align-items: center; gap: 3px; margin-right: 6px; }
.check input { width: 13px; height: 13px; flex: none; appearance: none; border: 1px solid #8e8f8f; background: linear-gradient(135deg, #d3d7df, #fff); box-shadow: inset 0 0 0 1px #fff; }
.check input:checked::before { content: ""; display: block; width: 5px; height: 9px; margin: 0 0 0 3px; border: solid #42599a; border-width: 0 2px 2px 0; transform: rotate(38deg); }
.list { display: flex; flex: none; margin-right: 13px; border: 1px solid #999; background: #f8f8f8; overflow: hidden; }
.components { height: 188px; margin-top: 8px; }
.primitives { height: 189px; margin-top: 6px; }
.grid { width: 100%; flex: 1; align-self: flex-start; table-layout: fixed; border-collapse: separate; border-spacing: 0; }
.components .grid { border-right: 1px solid #999; }
.grid caption { height: 18px; padding-left: 3px; border-bottom: 1px solid #999; background: #f0f0f0; text-align: left; line-height: 17px; }
.components caption { border-right: 1px solid #999; }
.c-name { width: 105px; }
.c-pads { width: 66px; }
.c-type { width: 34px; }
.grid th { height: 18px; padding: 0 3px; border-bottom: 1px solid #999; border-right: 1px solid #999; background: #f0f0f0; font-weight: 400; text-align: left; line-height: 17px; }
.grid th:last-child { border-right: 0; }
.components th:last-child { padding-right: 0; }
.sort { float: right; margin: 4px 6px 0 0; }
.grid td { height: 17px; padding: 0 2px; border-bottom: 1px solid #e2e2e2; border-right: 1px solid #e2e2e2; line-height: 16px; white-space: nowrap; }
.components td:first-child { display: flex; gap: 3px; padding-left: 3px; }
.chip { width: 12px; height: 14px; margin-top: 1px; }
.selected td + td, .selected span { background: #3399ff; color: #fff; }
.selected span { flex: 1; margin-right: -2px; }
.scroll { width: 17px; flex: none; background: linear-gradient(90deg, #e4e4e4, #f8f8f8); }
.scroll i { display: block; margin: 7px 5px; border: 3px solid transparent; border-bottom: 4px solid #444; border-top: 0; width: 6px; }
.preview { width: 256px; height: 101px; margin-top: 5px; border: 1px solid #999; background: linear-gradient(#3c3c3c, #080808); }
.panel-tabs { display: flex; height: 20px; flex: none; background: #f0f0f0; }
.arrows { display: flex; flex: none; align-items: center; justify-content: space-around; width: 36px; margin-right: 4px; }
.arrows .dim { color: #999; }
.tab { display: flex; flex: none; height: 19px; align-items: center; padding: 0 6px; border: solid #bbb; border-width: 0 1px 1px 0; border-radius: 0 0 3px 3px; background: #fff; }
.tab.active { background: #dcdcdc; }
.panel-tabs .active { padding: 0 5px; }

.editor { display: flex; flex: 1; min-width: 0; flex-direction: column; }
.doc-tabs { display: flex; height: 27px; flex: none; border-bottom: 3px solid #dcdcdc; }
.doc { display: flex; align-items: center; gap: 4px; padding: 0 3px 0 5px; color: #fff; }
.doc svg { width: 16px; height: 16px; }
.doc.active { padding-right: 5px; background: #dcdcdc; color: #000; }
.canvas { width: 100%; height: 0; flex: 1; min-height: 0; }
.pad-names { font: 40px "Liberation Sans", sans-serif; fill: #ffb0b0; stroke: #ffb0b0; text-anchor: middle; }
.layers { display: flex; height: 20px; flex: none; background: #f0f0f0; }
.layer-set { display: flex; width: 46px; height: 14px; margin: 3px 5px 0 3px; border: 1px solid #666; color: #777; line-height: 13px; }
.layer-set i { width: 25px; height: 12px; border-right: 1px solid #666; background: #ff0; }
.layer-set span { flex: 1; }
.layers .arrows { margin-right: 2px; border-right: 1px solid #999; }
.layer-tabs { display: flex; flex: 1; min-width: 0; overflow: hidden; }
.layer { gap: 5px; padding: 0 3px 0 5px; }
.layer i { width: 11px; height: 11px; border: 1px solid #999; }
.layer.active { font-weight: 700; }
.magenta { background: #f0f; } .purple { background: #800080; } .green { background: #008000; } .yellow { background: #ff0; } .olive { background: #808000; }
.filters { display: flex; flex: none; color: #666; }
.filters button { padding: 0 4px; border-right: 1px solid #ccc; height: 19px; }
.filters button:first-child { padding: 0 1px; }

.side { display: flex; width: 25px; flex: none; flex-direction: column; align-items: center; gap: 3px; padding-top: 1px; background: #f0f0f0; color: #666; }
.side button { width: 20px; padding: 4px 0; writing-mode: vertical-rl; border: 1px solid #d8d8d8; background: #fafafa; line-height: 18px; }

.status { display: flex; height: 24px; flex: none; align-items: center; padding-right: 4px; background: #f0f0f0; color: #666; }
.cell { height: 17px; border-right: 1px solid #a0a0a0; }
.coord-cell { width: 348px; }
.hint-cell { width: 348px; }
.status-buttons { display: flex; margin: 0 4px 0 auto; border-left: 1px solid #ccc; }
.status button { height: 18px; padding: 0 4px; border: 1px solid #ccc; border-left: 0; background: #fafafa; }
.status .pcb { padding: 0 11px; }
.status .more { padding: 0 2px; border-left: 1px solid #ccc; }
.taskbar { position: relative; display: flex; height: 8px; flex: none; border-top: 1px solid #0b2239; background: linear-gradient(90deg, #1d5585, #2a6ba3 55%, #1a4e86 75%, #144278); }
.start { width: 59px; }
.task { height: 7px; margin-right: 3px; border: 1px solid #c5e1ef; border-bottom: 0; }
.teal { width: 319px; background: linear-gradient(90deg, #5f9cba 0 158px, #9ac3da 159px); }
.pale { width: 159px; background: #c4dcea; }
.mid { width: 159px; background: linear-gradient(90deg, #9fc0d6, #5889b0); }
.desk { width: 14px; margin-left: auto; border: 1px solid #8ba4bc; background: #52738f; }
.orb { position: absolute; left: 9px; bottom: 0; }

.context { position: absolute; left: 70px; top: 261px; display: flex; width: 318px; flex-direction: column; padding: 2px; border: 1px solid #979797; background: linear-gradient(90deg, transparent 29px, #e2e3e3 29px 30px, #fff 30px 31px, transparent 31px), #f0f0f0; font-size: 12px; }
.context button { height: 22px; padding: 0 0 0 31px; border: 1px solid transparent; border-radius: 2px; text-align: left; line-height: 20px; }
.context .hot { border-color: #aecff7; background: linear-gradient(#eff2f6, #e3eaf4); }
.context hr { width: calc(100% - 29px); height: 2px; margin: 3px 0 3px 29px; border: solid; border-width: 1px 0; border-color: #dcdcdc transparent #fff; }
.ring { position: absolute; left: 14px; top: 115px; width: 168px; height: 32px; }

.ime { position: absolute; right: 30px; bottom: 50px; display: flex; align-items: flex-end; }
.sogou { position: absolute; left: -4px; bottom: 0; width: 28px; height: 28px; }
.ime-tools { display: flex; height: 23px; align-items: center; gap: 6px; padding: 0 4px 0 28px; border: 1px solid #b5b5b5; background: #fff; }
.ime button { display: flex; width: 16px; height: 16px; align-items: center; justify-content: center; font: 700 16px/16px "Noto Sans CJK SC", sans-serif; color: #1b71c9; }
.ime button svg { width: 15px; height: 15px; }
```
